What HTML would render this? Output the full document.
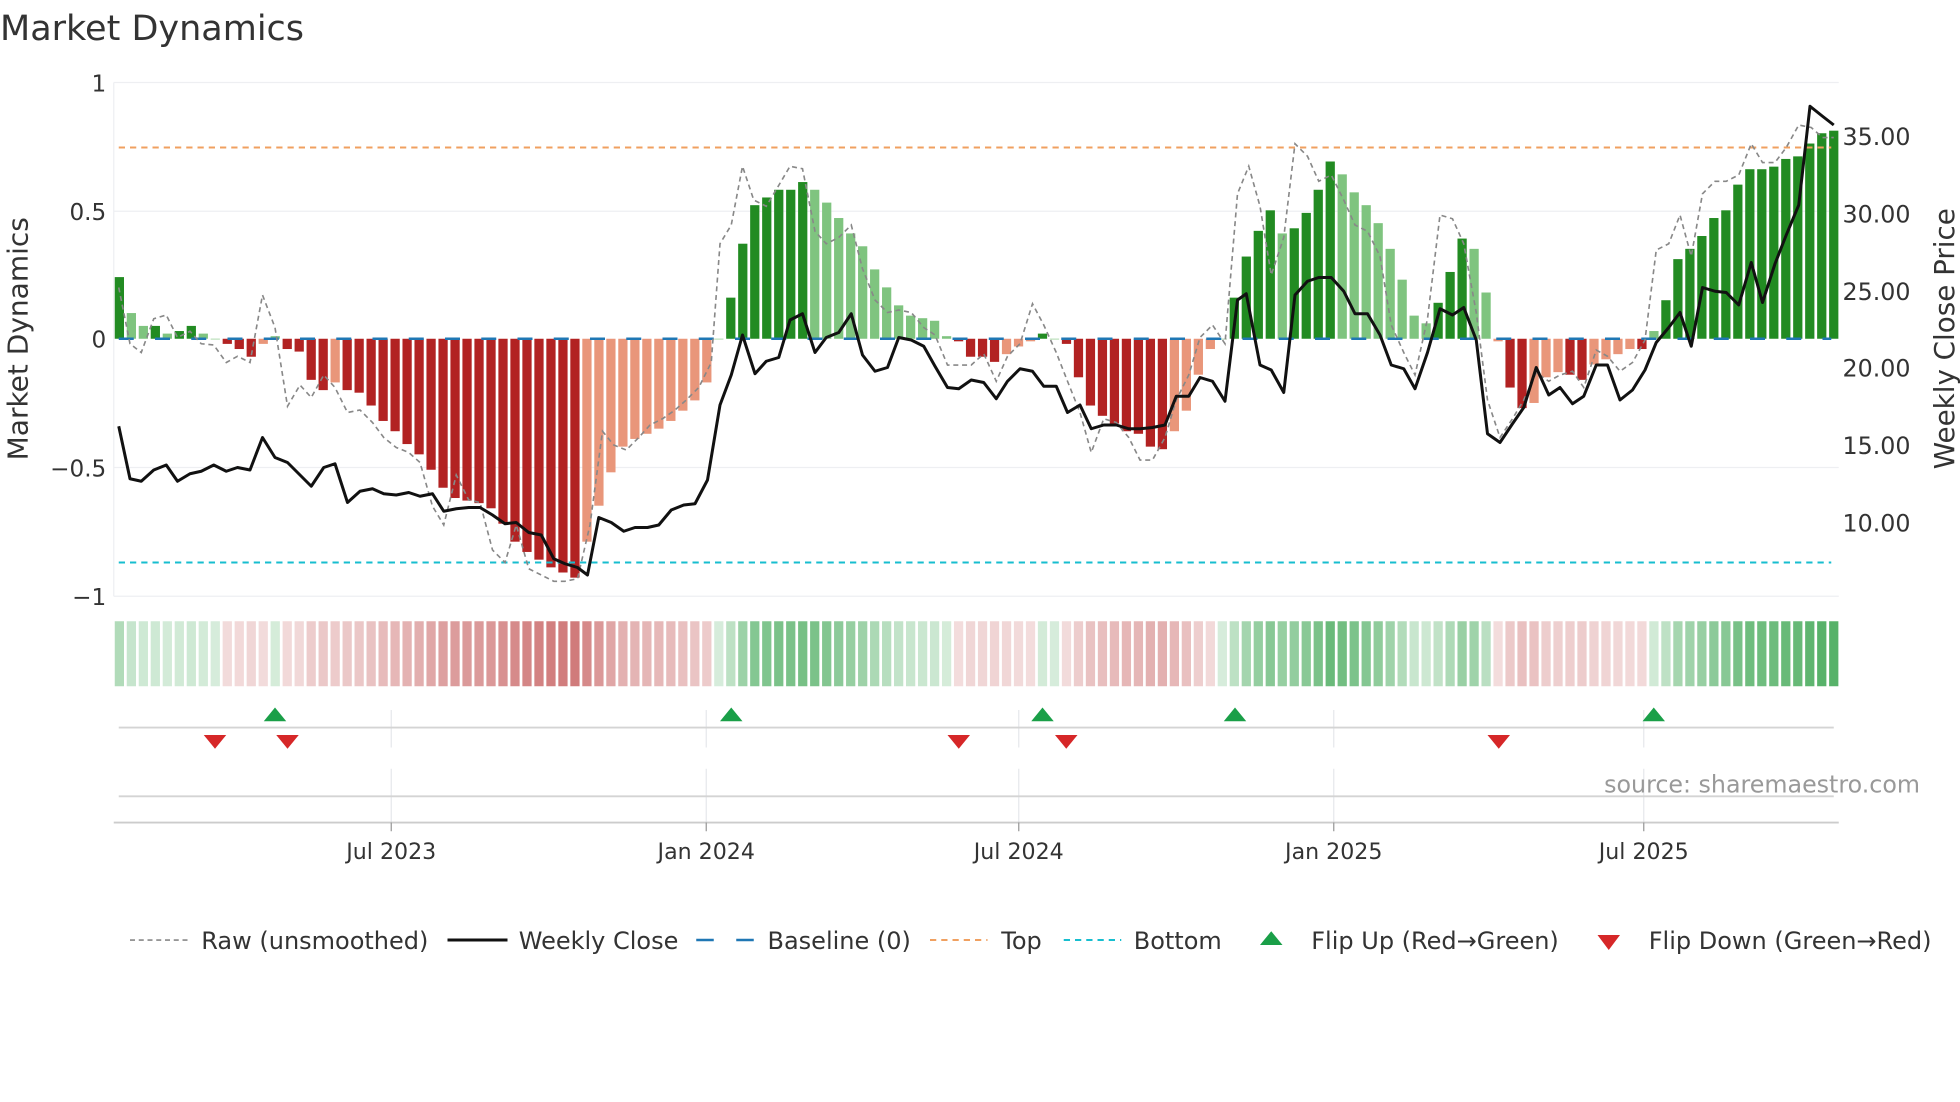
<!DOCTYPE html>
<html><head><meta charset="utf-8"><style>
html,body{margin:0;padding:0;background:#fff;width:1960px;height:1102px;overflow:hidden}
svg{display:block}
text{font-family:"DejaVu Sans","Liberation Sans",sans-serif;fill:#333}
</style></head><body>
<svg id="s" width="1960" height="1102" viewBox="0 0 1568 881.6" xmlns="http://www.w3.org/2000/svg">
<rect width="1568" height="881.6" fill="#fff"/>
<text x="0" y="32" font-size="28" fill="#333">Market Dynamics</text>
<g stroke="#eeeff2" stroke-width="1">
<line x1="91" x2="1471" y1="66" y2="66"/><line x1="91" x2="1471" y1="169" y2="169"/>
<line x1="91" x2="1471" y1="374" y2="374"/><line x1="91" x2="1471" y1="477" y2="477"/>
<line x1="91" x2="91" y1="66" y2="477"/>
</g>
<g font-size="18.5" text-anchor="end">
<text x="85" y="73">1</text><text x="85" y="176">0.5</text><text x="85" y="278">0</text>
<text x="85" y="381">−0.5</text><text x="85" y="484">−1</text>
</g>
<g font-size="19">
<text x="1474" y="116">35.00</text><text x="1474" y="178">30.00</text><text x="1474" y="240">25.00</text>
<text x="1474" y="301">20.00</text><text x="1474" y="363">15.00</text><text x="1474" y="425">10.00</text>
</g>
<text transform="translate(22,271) rotate(-90)" font-size="22.4" text-anchor="middle">Market Dynamics</text>
<text transform="translate(1563,271) rotate(-90)" font-size="22.2" text-anchor="middle">Weekly Close Price</text>
<g id="bars"></g>
<line x1="95" x2="1465" y1="271" y2="271" stroke="#1f77b4" stroke-width="2" stroke-dasharray="12,17"/>
<line x1="95" x2="1465" y1="118" y2="118" stroke="#f0a060" stroke-width="1.6" stroke-dasharray="5,4"/>
<line x1="95" x2="1465" y1="450" y2="450" stroke="#17becf" stroke-width="1.6" stroke-dasharray="5,4"/>
<polyline id="raw" fill="none" stroke="#888" stroke-width="1.3" stroke-dasharray="4,3"/>
<polyline id="px" fill="none" stroke="#111" stroke-width="2.4" stroke-linejoin="round"/>
<g id="strip"></g>
<g stroke="#e6e8ec" stroke-width="1">
<line x1="313" x2="313" y1="568" y2="598"/><line x1="565" x2="565" y1="568" y2="598"/><line x1="815" x2="815" y1="568" y2="598"/><line x1="1067" x2="1067" y1="568" y2="598"/><line x1="1315" x2="1315" y1="568" y2="598"/>
<line x1="313" x2="313" y1="615" y2="658"/><line x1="565" x2="565" y1="615" y2="658"/><line x1="815" x2="815" y1="615" y2="658"/><line x1="1067" x2="1067" y1="615" y2="658"/><line x1="1315" x2="1315" y1="615" y2="658"/>
</g>
<line x1="95" x2="1467" y1="582" y2="582" stroke="#d4d4d4" stroke-width="1.5"/>
<line x1="95" x2="1467" y1="637" y2="637" stroke="#d4d4d4" stroke-width="1.5"/>
<line x1="91" x2="1471" y1="658" y2="658" stroke="#ccc" stroke-width="1.5"/>
<g id="flips"></g>
<g stroke="#999" stroke-width="1"><line x1="313" x2="313" y1="658" y2="665"/><line x1="565" x2="565" y1="658" y2="665"/><line x1="815" x2="815" y1="658" y2="665"/><line x1="1067" x2="1067" y1="658" y2="665"/><line x1="1315" x2="1315" y1="658" y2="665"/></g>
<g font-size="17.7" text-anchor="middle">
<text x="313" y="687">Jul 2023</text><text x="565" y="687">Jan 2024</text><text x="815" y="687">Jul 2024</text><text x="1067" y="687">Jan 2025</text><text x="1315" y="687">Jul 2025</text>
</g>
<text x="1536" y="634" font-size="19" text-anchor="end" style="fill:#999">source: sharemaestro.com</text>
<g font-size="19.2">
<line x1="104" x2="150" y1="752" y2="752" stroke="#888" stroke-width="1.3" stroke-dasharray="4,3"/>
<text x="161" y="759">Raw (unsmoothed)</text>
<line x1="358" x2="406" y1="752" y2="752" stroke="#111" stroke-width="2.4"/>
<text x="415" y="759">Weekly Close</text>
<line x1="557" x2="603" y1="752" y2="752" stroke="#1f77b4" stroke-width="2" stroke-dasharray="14,18"/>
<text x="614" y="759">Baseline (0)</text>
<line x1="744" x2="790" y1="752" y2="752" stroke="#f0a060" stroke-width="1.6" stroke-dasharray="5,4"/>
<text x="801" y="759">Top</text>
<line x1="851" x2="897" y1="752" y2="752" stroke="#17becf" stroke-width="1.6" stroke-dasharray="5,4"/>
<text x="907" y="759">Bottom</text>
<polygon points="1008,756 1026,756 1017,745" fill="#1a9f48"/>
<text x="1049" y="759">Flip Up (Red→Green)</text>
<polygon points="1278,748 1296,748 1287,760" fill="#d62728"/>
<text x="1319" y="759">Flip Down (Green→Red)</text>
</g>
</svg>
<script>
var V=[0.24,0.1,0.05,0.05,0.02,0.03,0.05,0.02,0,-0.02,-0.04,-0.07,-0.02,0.01,-0.04,-0.05,-0.16,-0.2,-0.17,-0.2,-0.21,-0.26,-0.32,-0.36,-0.41,-0.45,-0.51,-0.58,-0.62,-0.63,-0.64,-0.66,-0.72,-0.79,-0.83,-0.86,-0.89,-0.91,-0.93,-0.79,-0.65,-0.52,-0.42,-0.39,-0.37,-0.35,-0.32,-0.28,-0.24,-0.17,0,0.16,0.37,0.52,0.55,0.58,0.58,0.61,0.58,0.53,0.47,0.41,0.36,0.27,0.2,0.13,0.09,0.08,0.07,0.01,-0.01,-0.07,-0.07,-0.09,-0.06,-0.03,-0.01,0.02,0,-0.02,-0.15,-0.26,-0.3,-0.33,-0.36,-0.37,-0.42,-0.43,-0.36,-0.28,-0.14,-0.04,0,0.16,0.32,0.42,0.5,0.41,0.43,0.49,0.58,0.69,0.64,0.57,0.52,0.45,0.35,0.23,0.09,0.06,0.14,0.26,0.39,0.35,0.18,-0.01,-0.19,-0.27,-0.25,-0.15,-0.13,-0.14,-0.16,-0.1,-0.08,-0.06,-0.04,-0.04,0.03,0.15,0.31,0.35,0.4,0.47,0.5,0.6,0.66,0.66,0.67,0.7,0.71,0.76,0.8,0.81];
var N=V.length,x0=95.5,x1=1467,st=(x1-x0)/(N-1),bw=7.4,ns="http://www.w3.org/2000/svg";
function el(t,a,p){var e=document.createElementNS(ns,t);for(var k in a)e.setAttribute(k,a[k]);p.appendChild(e);return e;}
var B=document.getElementById('bars'),S=document.getElementById('strip');
for(var i=0;i<N;i++){var v=V[i],pv=i?V[i-1]:0,x=x0+i*st-bw/2,h=Math.abs(v)*205.5;
var strong=Math.abs(v)>=Math.abs(pv);
var c=v>=0?(strong?'#228b22':'#7fc47f'):(strong?'#b22222':'#e9967a');
el('rect',{x:x,y:v>=0?271-h:271,width:bw,height:Math.max(h,0.5),fill:c},B);
var a=Math.min(1,0.22+Math.abs(v)*0.85);
var sc=v>=0?'rgba(70,170,90,'+a+')':'rgba(195,85,85,'+(0.2+Math.abs(v)*0.62)+')';
el('rect',{x:x,y:497,width:bw,height:52,fill:sc},S);}
var P="95,341 104,383 113,385 123,376 133,372 142,385 152,379 161,377 171,372 181,377 190,374 200,376 210,350 220,366 230,370 240,380 249,389 259,374 268,371 278,402 288,393 298,391 307,395 317,396 327,394 336,397 346,395 355,409 365,407 375,406 384,406 394,412 404,419 413,418 423,426 433,428 443,447 452,451 462,454 470,460 479,414 489,418 499,425 508,422 518,422 527,420 537,408 547,404 556,403 566,384 576,324 585,300 594,268 604,299 613,289 623,286 632,256 642,251 652,282 661,270 671,266 681,251 690,284 700,297 710,294 719,270 729,272 739,277 748,293 758,310 767,311 777,304 787,306 797,319 806,305 816,295 826,297 835,309 845,309 854,330 864,324 873,343 883,340 893,340 903,343 912,343 922,342 932,340 941,317 951,317 960,302 970,305 980,321 990,240 997,235 1008,292 1017,296 1027,314 1036,236 1046,225 1055,222 1065,222 1075,233 1084,251 1094,251 1104,268 1113,292 1123,295 1132,311 1142,282 1152,247 1162,252 1171,246 1181,272 1190,347 1200,354 1210,339 1219,326 1229,294 1239,316 1248,310 1258,323 1267,317 1277,292 1286,292 1296,320 1306,312 1316,296 1325,274 1335,262 1344,250 1353,277 1362,230 1372,233 1381,234 1391,244 1401,210 1410,242 1420,211 1429,188 1439,164 1448,85 1458,93 1467,100";
document.getElementById('px').setAttribute('points',P);
var R="95,230 104,275 113,282 123,255 133,252 142,270 152,265 161,275 171,276 181,290 190,285 200,290 210,236 220,262 230,325 240,308 249,318 259,300 268,310 278,330 288,328 298,338 307,350 317,358 327,362 336,370 346,405 355,420 365,380 375,400 384,402 394,440 404,450 413,420 423,455 433,460 443,465 452,465 462,463 472,420 482,345 491,356 501,360 511,350 520,340 530,335 540,328 549,320 559,310 569,290 576,195 585,180 594,133 603,160 613,165 622,150 632,133 642,135 652,185 661,195 671,190 681,180 690,215 700,240 710,250 719,248 729,250 739,262 748,268 758,292 767,292 777,292 787,283 797,305 806,285 816,275 826,243 835,260 845,282 854,305 864,330 873,362 883,335 893,338 903,350 912,368 922,368 932,350 941,320 951,300 960,270 970,260 980,275 990,155 999,133 1008,165 1017,220 1027,190 1036,115 1046,125 1055,145 1065,140 1075,160 1084,180 1094,185 1104,205 1113,260 1123,282 1132,300 1142,255 1152,172 1162,175 1171,195 1181,250 1190,320 1200,350 1210,335 1219,320 1229,298 1239,305 1248,300 1258,297 1267,310 1277,280 1286,285 1296,297 1306,290 1316,272 1325,200 1335,195 1344,172 1353,205 1362,155 1372,145 1381,145 1391,140 1401,115 1410,130 1420,130 1429,118 1439,100 1449,102 1458,110 1467,110";
document.getElementById('raw').setAttribute('points',R);
var F=document.getElementById('flips');
[220,585,834,988,1323].forEach(function(x){el('polygon',{points:(x-9)+',577 '+(x+9)+',577 '+x+',566',fill:'#1a9f48'},F);});
[172,230,767,853,1199].forEach(function(x){el('polygon',{points:(x-9)+',588 '+(x+9)+',588 '+x+',599',fill:'#d62728'},F);});
</script>
</body></html>
